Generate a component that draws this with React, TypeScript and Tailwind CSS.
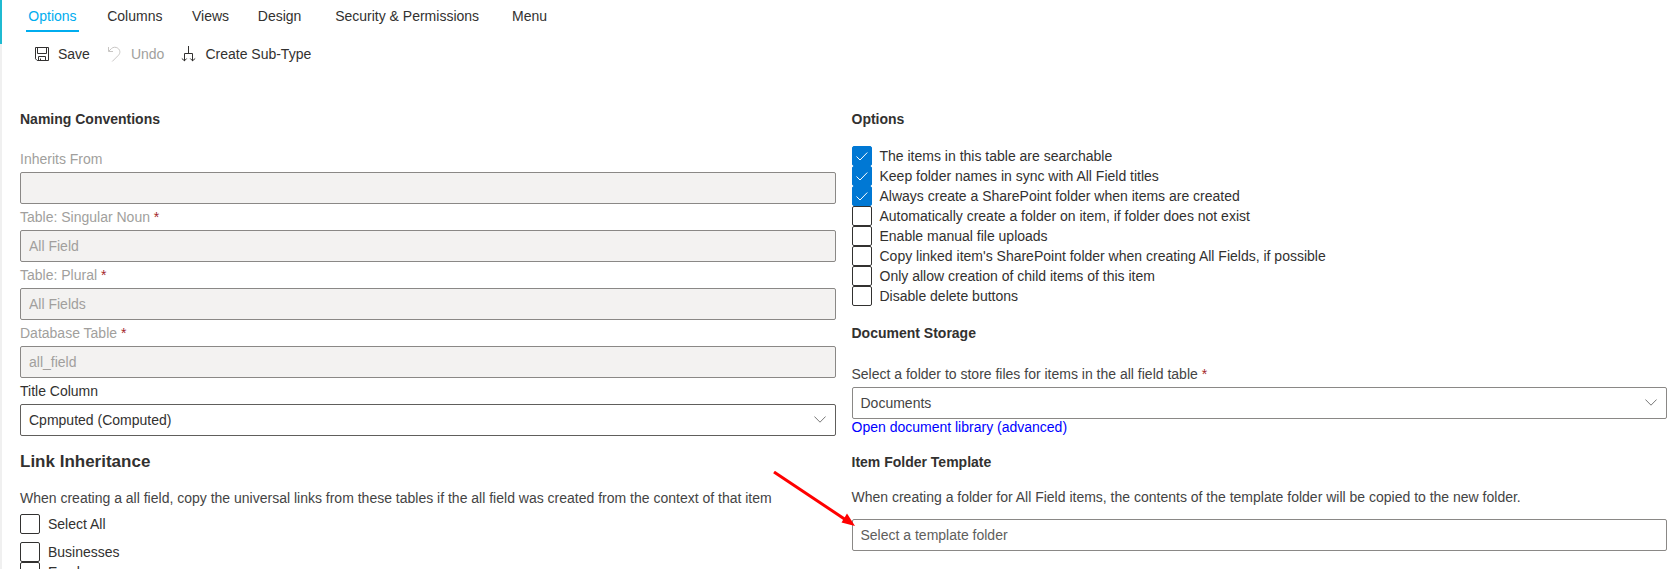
import React, { useId, useState } from "react";

const tabs = ["Options", "Columns", "Views", "Design", "Security & Permissions", "Menu"];

const tableOptions = [
  { label: "The items in this table are searchable", on: true },
  { label: "Keep folder names in sync with All Field titles", on: true },
  { label: "Always create a SharePoint folder when items are created", on: true },
  { label: "Automatically create a folder on item, if folder does not exist", on: false },
  { label: "Enable manual file uploads", on: false },
  { label: "Copy linked item's SharePoint folder when creating All Fields, if possible", on: false },
  { label: "Only allow creation of child items of this item", on: false },
  { label: "Disable delete buttons", on: false },
];

function SaveIcon() {
  return (
    <svg width="16" height="16" viewBox="0 0 16 16" fill="none" stroke="currentColor" aria-hidden="true">
      <path d="M1.5 1.5h13v13H3.2L1.5 12.8z" />
      <path d="M3.5 1.5v6h9v-6M4.5 14.5v-4h7v4M6.5 14.5v-2" />
    </svg>
  );
}

function UndoIcon() {
  return (
    <svg width="16" height="16" viewBox="0 0 16 16" fill="none" stroke="#c8c6c4" aria-hidden="true">
      <path d="M1.5 1v4.500H6M1.800 5.200l2.600-2.600C6 1 8.800 .8 10.800 2.200C13.300 4 13.500 7 11.500 9.200L5.200 15.500" />
    </svg>
  );
}

function BranchIcon() {
  return (
    <svg width="16" height="16" viewBox="0 0 16 16" fill="none" stroke="currentColor" aria-hidden="true">
      <path d="M7.500 0v7.500M3.500 15V7.500h8V15M.8 12.500l2.700 2.300 2.200-2.300M9.300 12.500l2.200 2.300 2.700-2.300" />
    </svg>
  );
}

function Chevron() {
  return (
    <svg className="pointer-events-none absolute right-[10px] top-[11px]" width="12" height="10" viewBox="0 0 12 10" fill="none" stroke="#777" aria-hidden="true">
      <path d="M.4 1.500 6 7.200l5.600-5.700" />
    </svg>
  );
}

function Check({ label, on = false }: { label: string; on?: boolean }) {
  const [checked, setChecked] = useState(on);
  return (
    <label className="flex h-5 items-center gap-2 text-[#323130]">
      <span className="relative flex size-5">
        <input
          type="checkbox"
          checked={checked}
          onChange={(e) => setChecked(e.target.checked)}
          className="peer size-5 appearance-none rounded-[2px] border border-[#323130] bg-white checked:border-[#0078d4] checked:bg-[#0078d4]"
        />
        <svg className="pointer-events-none absolute inset-0 hidden peer-checked:block" width="20" height="20" viewBox="0 0 20 20" fill="none" stroke="#fff" aria-hidden="true">
          <path d="M4.500 10.500 8 14l7.300-7.500" />
        </svg>
      </span>
      {label}
    </label>
  );
}

function LockedField({ label, value, required }: { label: string; value: string; required?: boolean }) {
  const id = useId();
  return (
    <div>
      <label htmlFor={id} className="block h-[26px] leading-[26px] text-[#a19f9d]">
        {label}
        {required && <span className="text-[#a4262c]"> *</span>}
      </label>
      <input
        id={id}
        disabled
        defaultValue={value}
        className="block h-8 w-full rounded-[2px] border border-[#8a8886] bg-[#f3f2f1] px-2 text-[#a19f9d]"
      />
    </div>
  );
}

export default function App() {
  const [tab, setTab] = useState("Options");
  return (
    <div className="relative flex h-screen overflow-hidden bg-white font-['Liberation_Sans',Arial,sans-serif] text-[14px] leading-5 text-[#323130]">
      <div className="w-[2px] shrink-0 bg-[#f0f0f0]">
        <div className="h-11 bg-[#1fbad1]" />
      </div>
      <div className="min-w-0 grow">
        <nav className="flex gap-[26px] pl-6">
          {tabs.map((t) => (
            <button
              key={t}
              data-label={t}
              onClick={() => setTab(t)}
              className={
                "h-8 border-b-2 pt-[2px] after:invisible after:block after:h-0 after:overflow-hidden after:font-bold after:content-[attr(data-label)] " +
                (t === tab ? "border-[#00adef] text-[#00adef]" : "border-transparent")
              }
            >
              {t}
            </button>
          ))}
        </nav>
        <div className="flex h-11 items-center gap-[17px] pl-8">
          <button className="flex items-center gap-2"><SaveIcon />Save</button>
          <button disabled className="flex items-center gap-2 text-[#a19f9d]"><UndoIcon />Undo</button>
          <button className="flex items-center gap-2"><BranchIcon />Create Sub-Type</button>
        </div>

        <main className="grid grid-cols-2 gap-4 pl-[18px] pr-[11px] pt-[33px]">
          <section>
            <h2 className="mb-[17px] font-bold">Naming Conventions</h2>
            <LockedField label="Inherits From" value="" />
            <LockedField label="Table: Singular Noun" value="All Field" required />
            <LockedField label="Table: Plural" value="All Fields" required />
            <LockedField label="Database Table" value="all_field" required />
            <label htmlFor="title-column" className="block h-[26px] leading-[26px]">Title Column</label>
            <div className="relative">
              <select id="title-column" className="block h-8 w-full appearance-none rounded-[2px] border border-[#605e5c] bg-white px-2">
                <option>Cpmputed (Computed)</option>
              </select>
              <Chevron />
            </div>
            <h2 className="mt-4 text-[17px] leading-5 font-bold">Link Inheritance</h2>
            <p className="mt-4 mb-[6px] text-[#444]">
              When creating a all field, copy the universal links from these tables if the all field was created from the context of that item
            </p>
            <Check label="Select All" />
            <div className="mt-2">
              <Check label="Businesses" />
              <Check label="Employees" />
            </div>
          </section>

          <section>
            <h2 className="mb-[17px] font-bold">Options</h2>
            {tableOptions.map((o) => (
              <Check key={o.label} label={o.label} on={o.on} />
            ))}
            <h2 className="mt-[17px] mb-[18px] font-bold">Document Storage</h2>
            <label htmlFor="storage" className="block h-[26px] leading-[26px] text-[#444]">
              Select a folder to store files for items in the all field table<span className="text-[#a4262c]"> *</span>
            </label>
            <div className="relative">
              <select id="storage" className="block h-8 w-full appearance-none rounded-[2px] border border-[#8a8886] bg-white px-2 text-[#444]">
                <option>Documents</option>
              </select>
              <Chevron />
            </div>
            <a href="#library" className="block h-4 leading-4 text-[#0000ff]">Open document library (advanced)</a>
            <h2 className="mt-[17px] font-bold">Item Folder Template</h2>
            <p className="mt-[15px] mb-3 text-[#444]">
              When creating a folder for All Field items, the contents of the template folder will be copied to the new folder.
            </p>
            <div className="relative">
              <input
                aria-label="Template folder"
                placeholder="Select a template folder"
                className="block h-8 w-full rounded-[2px] border border-[#8a8886] px-2 placeholder:text-[#605e5c]"
              />
              <svg className="pointer-events-none absolute -left-20 -top-12" width="84" height="56" viewBox="0 0 84 56" aria-hidden="true">
                <path d="M2 1 74 49" stroke="#f00" strokeWidth="3" />
                <path d="M83 55 69.500 51.500 75 42.500z" fill="#f00" />
              </svg>
            </div>
          </section>
        </main>
      </div>
    </div>
  );
}
